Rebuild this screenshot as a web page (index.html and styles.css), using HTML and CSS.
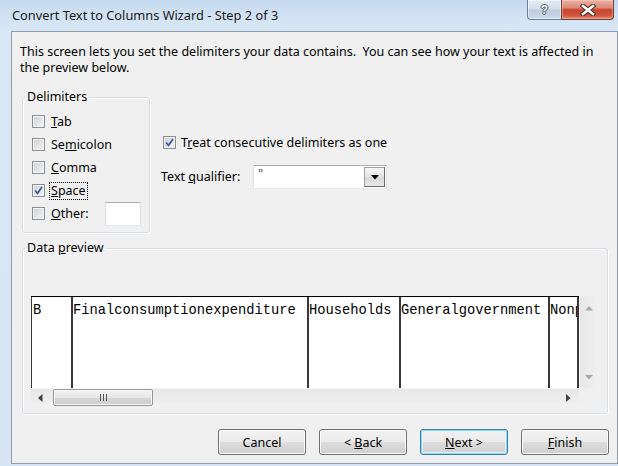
FILE: index.html
```html
<!DOCTYPE html>
<html lang="en">
<head>
<meta charset="utf-8">
<title>Convert Text to Columns Wizard - Step 2 of 3</title>
<link rel="stylesheet" href="styles.css">
</head>
<body>
<div class="window">
  <div class="titlebar">
    <span class="title">Convert Text to Columns Wizard - Step 2 of 3</span>
    <div class="caption">
      <span class="cap help"><span class="qmark">?</span></span>
      <span class="cap close">
        <svg width="16" height="12" viewBox="0 0 16 12">
          <path d="M3 2 L13 10 M13 2 L3 10" stroke="#4a2a24" stroke-width="4.6" stroke-linecap="square" fill="none"/>
          <path d="M3 2 L13 10 M13 2 L3 10" stroke="#ffffff" stroke-width="2.6" stroke-linecap="square" fill="none"/>
        </svg>
      </span>
    </div>
  </div>

  <div class="client">
    <p class="intro">This screen lets you set the delimiters your data contains.&nbsp; You can see how your text is affected in<br>the preview below.</p>

    <div class="options">
      <fieldset class="group delimiters">
        <legend>Delimiters</legend>
        <label class="check"><span class="box"></span><span><u>T</u>ab</span></label>
        <label class="check"><span class="box"></span><span>Se<u>m</u>icolon</span></label>
        <label class="check"><span class="box"></span><span><u>C</u>omma</span></label>
        <label class="check"><span class="box checked"><svg width="11" height="11" viewBox="0 0 11 11"><path d="M2 5.5 L4.5 8.3 L9 2" stroke="#3d55a3" stroke-width="1.7" fill="none"/></svg></span><span class="focus"><u>S</u>pace</span></label>
        <label class="check other"><span class="box"></span><span><u>O</u>ther:</span><span class="textbox"></span></label>
      </fieldset>

      <div class="side">
        <label class="check"><span class="box checked"><svg width="11" height="11" viewBox="0 0 11 11"><path d="M2 5.5 L4.5 8.3 L9 2" stroke="#3d55a3" stroke-width="1.7" fill="none"/></svg></span><span>T<u>r</u>eat consecutive delimiters as one</span></label>
        <div class="qualifier">
          <span class="qlabel">Text <u>q</u>ualifier:</span>
          <div class="combo">
            <span class="value">"</span>
            <span class="drop"><svg width="8" height="5" viewBox="0 0 8 5"><path d="M0 0 H8 L4 4.5 Z" fill="#000"/></svg></span>
          </div>
        </div>
      </div>
    </div>

    <fieldset class="group preview">
      <legend>Data <u>p</u>review</legend>
      <div class="frame">
        <div class="sheet">
          <div class="cell c1">B</div>
          <div class="cell c2">Finalconsumptionexpenditure</div>
          <div class="cell c3">Households</div>
          <div class="cell c4">Generalgovernment</div>
          <div class="cell c5">Nonp</div>
        </div>
        <div class="vscroll">
          <svg width="8" height="5" viewBox="0 0 8 5"><path d="M0 4.5 H8 L4 0 Z" fill="#a9a9a9"/></svg>
          <svg width="8" height="5" viewBox="0 0 8 5"><path d="M0 0 H8 L4 4.5 Z" fill="#a9a9a9"/></svg>
        </div>
        <div class="hscroll">
          <svg class="arrow" width="5" height="8" viewBox="0 0 5 8"><path d="M4.5 0 V8 L0 4 Z" fill="#404040"/></svg>
          <span class="thumb"><span class="grip"></span></span>
          <svg class="arrow right" width="5" height="8" viewBox="0 0 5 8"><path d="M0 0 V8 L4.5 4 Z" fill="#404040"/></svg>
        </div>
        <div class="corner"></div>
      </div>
    </fieldset>

    <div class="buttons">
      <button class="btn" type="button">Cancel</button>
      <button class="btn" type="button">&lt; <u>B</u>ack</button>
      <button class="btn default" type="button"><u>N</u>ext &gt;</button>
      <button class="btn" type="button"><u>F</u>inish</button>
    </div>
  </div>
</div>
</body>
</html>
```

FILE: styles.css
```css
* {
  box-sizing: border-box;
}

html,
body {
  margin: 0;
  padding: 0;
}

body {
  width: 618px;
  height: 466px;
  overflow: hidden;
  font-family: "Noto Sans", "Segoe UI", sans-serif;
  font-size: 12.5px;
  color: #000;
  background: #d6e4f4;
}

/* window frame */
.window {
  width: 618px;
  height: 466px;
  display: flex;
  flex-direction: column;
  background: linear-gradient(#c4d9ef 0, #d2e2f3 16px, #d9e7f5 31px, #d6e4f4 100%);
}

.titlebar {
  height: 31px;
  flex: none;
  display: flex;
  align-items: flex-start;
  padding-left: 12px;
}

.title {
  line-height: 30px;
  font-size: 12.8px;
  color: #1b1b1b;
}

.caption {
  margin-left: auto;
  margin-right: 4px;
  display: flex;
}

.cap {
  height: 20px;
  display: flex;
  align-items: center;
  justify-content: center;
  border: 1px solid #6f7f93;
  border-top: none;
}

.cap.help {
  width: 34px;
  border-right: none;
  border-radius: 0 0 0 4px;
  background: linear-gradient(#e4ecf5, #d3deeb 48%, #bccbdd 52%, #cbd8e7);
  box-shadow: inset 0 0 0 1px rgba(255, 255, 255, 0.5);
}

.qmark {
  font-family: "Liberation Sans", sans-serif;
  font-weight: bold;
  font-size: 12px;
  line-height: 12px;
  color: #fff;
  text-shadow: 1px 0 #4d5b6c, -1px 0 #4d5b6c, 0 1px #4d5b6c, 0 -1px #4d5b6c;
}

.cap.close {
  width: 53px;
  border-color: #6c3b33;
  border-radius: 0 0 4px 0;
  background: linear-gradient(#eab2a4, #dc8a76 40%, #c8452f 52%, #d0543d 80%, #e08d72);
  box-shadow: inset 0 0 0 1px rgba(255, 220, 210, 0.4);
}

/* client area */
.client {
  flex: 1;
  margin: 0 0 2px 11px;
  border: 1px solid #8f9cac;
  background: #f0f0f0;
  display: flex;
  flex-direction: column;
}

.intro {
  margin: 0;
  padding: 12px 8px 0 8px;
  line-height: 16px;
}

.options {
  display: flex;
  margin-top: 13px;
}

.group {
  margin: 0 0 0 10px;
  border: 1px solid #d5dfe5;
  border-radius: 3px;
  box-shadow: 1px 1px 0 #fff, inset 1px 1px 0 #fff;
  min-width: 0;
}

.group legend {
  padding: 0 2px;
  line-height: 16px;
}

.delimiters {
  width: 128px;
  padding: 5px 8px 7px 2px;
}

.check {
  display: flex;
  align-items: center;
  height: 23px;
  gap: 6px;
  line-height: 16px;
}

.delimiters .check {
  padding-left: 7px;
}

.box {
  width: 13px;
  height: 13px;
  flex: none;
  display: flex;
  align-items: center;
  justify-content: center;
  border: 1px solid #8e8f8f;
  background: linear-gradient(135deg, #cbcfd5, #f6f6f6);
  box-shadow: inset 0 0 0 1px #f4f4f4;
}

.focus {
  outline: 1px dotted #000;
  outline-offset: 0;
  padding: 0 1px;
  margin-left: -1px;
}

.textbox {
  margin-left: auto;
  width: 36px;
  height: 24px;
  background: #fff;
  border: 1px solid #dbdfe6;
  border-top-color: #abadb3;
  border-bottom-color: #e3e9ef;
}

.side {
  margin-left: 11px;
  padding-top: 42px;
}

.side .check {
  padding-left: 2px;
  gap: 5px;
}

.qualifier {
  display: flex;
  align-items: center;
  margin-top: 11px;
  height: 24px;
}

.qlabel {
  width: 92px;
  line-height: 16px;
}

.combo {
  width: 134px;
  height: 24px;
  display: flex;
  align-items: flex-start;
  background: #fff;
  border: 1px solid #abadb3;
  border-bottom-color: #e3e9ef;
  border-left-color: #e2e3ea;
  border-right-color: #dbdfe6;
}

.value {
  flex: 1;
  padding: 1px 0 0 4px;
  line-height: 14px;
  color: #5a3a1a;
}

.drop {
  width: 21px;
  height: 20px;
  margin: 1px 1px 0 0;
  display: flex;
  align-items: center;
  justify-content: center;
  border: 1px solid #a0a0a0;
  border-right-color: #6a6a6a;
  border-bottom-color: #6a6a6a;
  background: linear-gradient(#f6f6f6, #e4e4e4 50%, #d9d9d9 51%, #e8e8e8);
}

/* data preview */
.preview {
  width: 586px;
  margin-top: 7px;
  padding: 40px 0 7px 2px;
}

.frame {
  margin-left: 6px;
  display: grid;
  grid-template-columns: 548px 19px;
  grid-template-rows: 92px 18px;
}

.sheet {
  background: #fff;
  border-top: 1px solid #000;
  display: grid;
  grid-template-columns: 40px 236px 92px 149px 31px;
  font-family: "Liberation Mono", "Courier New", monospace;
  font-size: 13.75px;
  line-height: 16px;
}

.cell {
  border-left: 2px solid #383838;
  padding-top: 6px;
  white-space: nowrap;
  overflow: hidden;
}

.cell.c1 {
  border-left-width: 1px;
  padding-left: 1px;
}

.cell.c5 {
  border-right: 2px solid #383838;
}

.vscroll {
  display: flex;
  flex-direction: column;
  align-items: center;
  justify-content: space-between;
  padding: 10px 0 8px;
  background: linear-gradient(90deg, #e7e7e7, #f1f1f1);
  border-left: 1px solid #f7f7f7;
}

.hscroll {
  display: flex;
  align-items: center;
  padding: 0 8px 0 7px;
  background: linear-gradient(#e7e7e7, #f1f1f1);
  border-top: 1px solid #f7f7f7;
}

.arrow.right {
  margin-left: auto;
}

.thumb {
  width: 100px;
  height: 17px;
  margin-left: 10px;
  display: flex;
  align-items: center;
  justify-content: center;
  border: 1px solid #979797;
  border-radius: 2px;
  background: linear-gradient(#f4f4f4, #e6e6e6 50%, #d6d6d6 51%, #cfcfcf);
  box-shadow: inset 0 0 0 1px #f8f8f8;
}

.grip {
  width: 7px;
  height: 7px;
  background: linear-gradient(90deg, #555 0 1px, transparent 1px 3px, #555 3px 4px, transparent 4px 6px, #555 6px 7px);
}

.corner {
  background: #f0f0f0;
}

/* dialog buttons */
.buttons {
  display: flex;
  justify-content: flex-end;
  gap: 13px;
  margin-top: 15px;
  padding-right: 8px;
}

.btn {
  width: 88px;
  height: 26px;
  padding: 0;
  font: inherit;
  color: #000;
  border: 1px solid #707070;
  border-radius: 3px;
  background: linear-gradient(#f2f2f2, #ebebeb 48%, #dddddd 52%, #cfcfcf);
  box-shadow: inset 0 0 0 1px #fbfbfb;
}

.btn.default {
  border-color: #3c7fb1;
  box-shadow: inset 0 0 0 1px #8fd4f3, inset 0 0 0 2px #e6f4fb;
}
```
